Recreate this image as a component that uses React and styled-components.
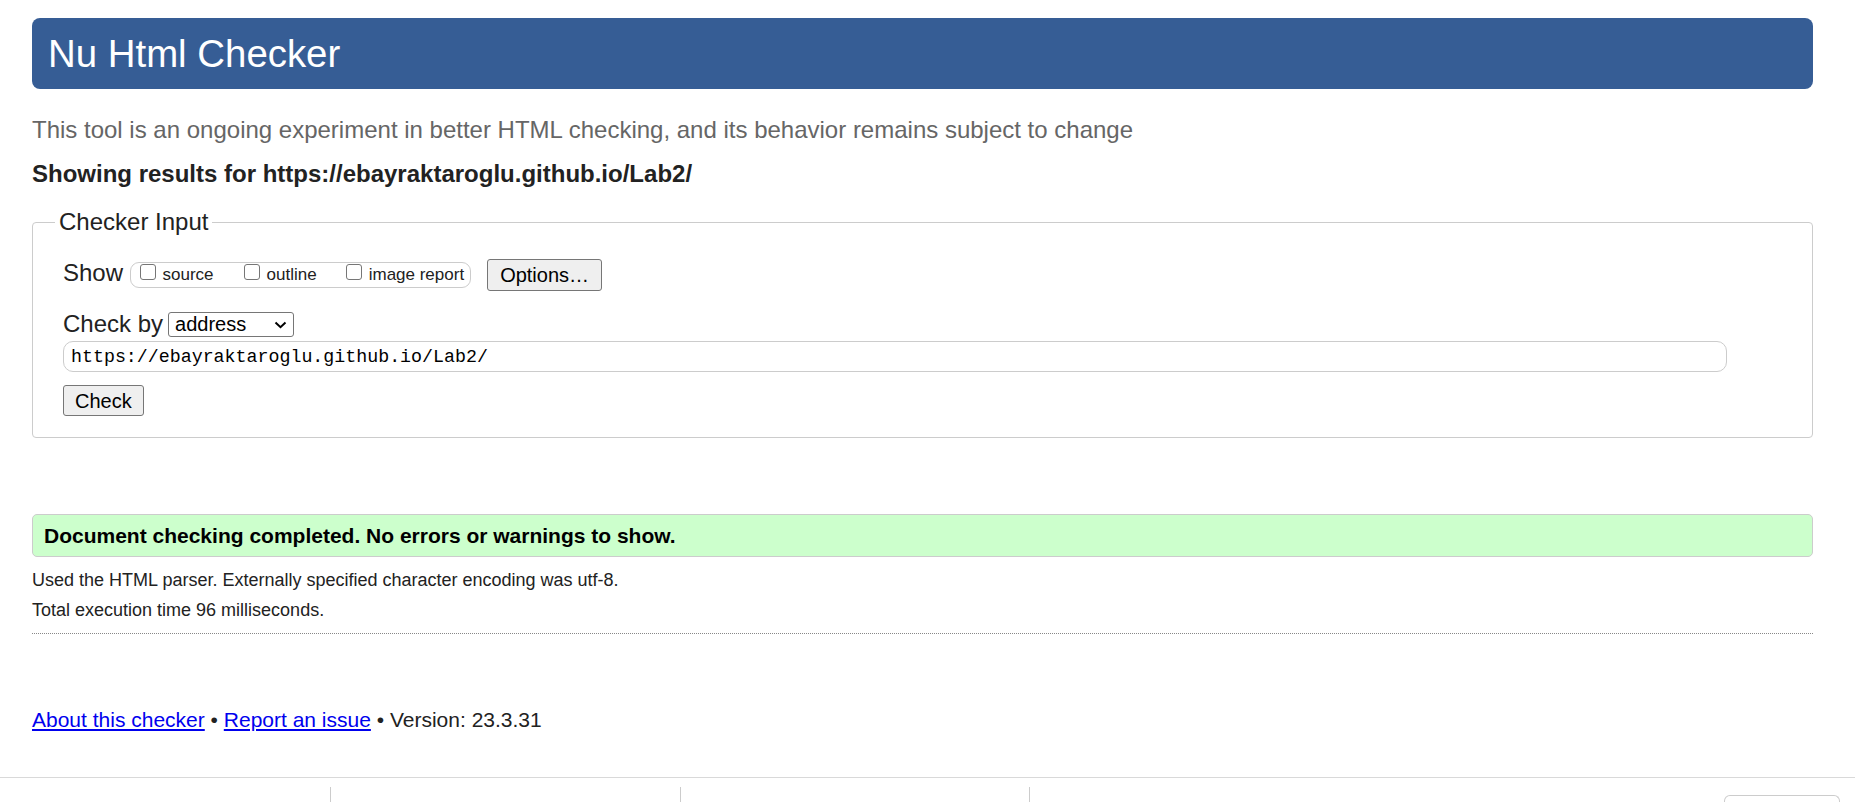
import React from "react";
import styled, { createGlobalStyle } from "styled-components";

const GlobalStyle = createGlobalStyle`
  html, body {
    margin: 0;
    padding: 0;
    background: #fff;
  }
  body {
    font-family: "Liberation Sans", Arial, sans-serif;
    color: #222;
  }
  * {
    box-sizing: border-box;
  }
`;

const Page = styled.div`
  padding: 18px 42px 0 32px;
`;

const Header = styled.h1`
  display: flex;
  align-items: center;
  height: 71px;
  margin: 0;
  padding: 2px 16px 0;
  border-radius: 8px;
  background: #365d95;
  color: #fff;
  font-size: 38.4px;
  font-weight: normal;
  line-height: 1.15;
`;

const Intro = styled.p`
  margin: 27px 0 0;
  font-size: 24px;
  line-height: 28px;
  color: #666;
`;

const ResultsFor = styled.p`
  margin: 16px 0 0;
  font-size: 24px;
  line-height: 28px;
  font-weight: bold;
  color: #222;
`;

const InputBox = styled.fieldset`
  margin: 20px 0 0;
  min-width: 0;
  padding: 23px 30px 21px;
  border: 1px solid #ccc;
  border-radius: 4px;

  legend {
    margin-left: -8px;
    padding: 0 4px;
    font-size: 24px;
    line-height: 28px;
    color: #222;
  }
`;

const Row = styled.div`
  display: flex;
  align-items: center;
  height: ${({ $height }) => $height}px;
  margin-top: ${({ $gap }) => $gap || 0}px;
`;

const RowLabel = styled.span`
  margin: 0 ${({ $space }) => $space}px ${({ $lift }) => $lift || 0}px 0;
  font-size: 24px;
  line-height: 28px;
  color: #222;
`;

const ShowGroup = styled.div`
  display: flex;
  align-items: center;
  height: 26px;
  padding: 0 6px 0 8.5px;
  border: 1px solid #ccc;
  border-radius: 9px;
`;

const CheckLabel = styled.label`
  display: flex;
  align-items: center;
  margin-right: ${({ $space }) => $space || 0}px;
  font-size: 17px;
  line-height: 20px;
  color: #222;
`;

const Checkbox = styled.input.attrs({ type: "checkbox" })`
  appearance: none;
  width: 16px;
  height: 16px;
  margin: 0 7px 7px 0;
  border: 1px solid #767676;
  border-radius: 3px;
  background: #fff;
`;

const Button = styled.button`
  height: ${({ $height }) => $height}px;
  margin-left: ${({ $offset }) => $offset || 0}px;
  padding: 0 ${({ $pad }) => $pad}px;
  border: 1px solid #767676;
  border-radius: 3px;
  background: #efefef;
  color: #000;
  font-family: "Liberation Sans", Arial, sans-serif;
  font-size: 20px;
  line-height: 1;
`;

const SelectWrap = styled.div`
  position: relative;
  width: 126px;
  height: 25px;

  svg {
    position: absolute;
    right: 7px;
    top: 9px;
    pointer-events: none;
  }
`;

const Select = styled.select`
  appearance: none;
  width: 100%;
  height: 100%;
  padding: 0 0 0 6px;
  border: 1px solid #767676;
  border-radius: 3px;
  background: #fff;
  color: #000;
  font-family: "Liberation Sans", Arial, sans-serif;
  font-size: 20px;
`;

const UrlInput = styled.input`
  display: block;
  width: calc(100% - 55px);
  height: 31px;
  margin-top: 3px;
  padding: 0 7px;
  border: 1px solid #ccc;
  border-radius: 10px;
  color: #000;
  font-family: "Liberation Mono", "DejaVu Sans Mono", monospace;
  font-size: 18.3px;
`;

const CheckRow = styled.div`
  margin-top: 13px;
`;

const Success = styled.div`
  display: flex;
  align-items: center;
  height: 43px;
  margin-top: 76px;
  padding: 0 11px;
  border: 1px solid #ccc;
  border-radius: 5px;
  background: #ccffcc;
  color: #000;
  font-size: 21px;
  line-height: 24px;
  font-weight: bold;
`;

const Detail = styled.p`
  margin: ${({ $gap }) => $gap}px 0 0;
  font-size: 18px;
  line-height: 22px;
  color: #222;
`;

const Rule = styled.hr`
  margin: 12px 0 0;
  border: 0;
  border-top: 1px dotted #888;
`;

const Footer = styled.p`
  margin: 74px 0 0;
  font-size: 21px;
  line-height: 24px;
  color: #222;

  a {
    color: #0000ee;
    text-decoration: underline;
  }
`;

const BottomBar = styled.div`
  display: flex;
  height: 25px;
  margin-top: 45px;
  overflow: hidden;
  border-top: 1px solid #d9d9d9;
`;

const Tab = styled.div`
  flex: none;
  width: ${({ $width }) => $width}px;
  height: 20px;
  margin-top: 9px;
  border-right: 1px solid #ccc;
`;

const Spacer = styled.div`
  flex: 1;
`;

const BarButton = styled.div`
  flex: none;
  width: 116px;
  height: 20px;
  margin: 17px 15px 0 0;
  border: 1px solid #ccc;
  border-bottom: 0;
  border-radius: 6px 6px 0 0;
`;

const Chevron = () => (
  <svg width="13" height="8" viewBox="0 0 13 8">
    <path d="M1.5 1.5 L6.5 6.2 L11.5 1.5" fill="none" stroke="#000" strokeWidth="2" />
  </svg>
);

const App = () => {
  const url = "https://ebayraktaroglu.github.io/Lab2/";
  return (
    <>
      <GlobalStyle />
      <Page>
        <Header>Nu Html Checker</Header>
        <Intro>
          This tool is an ongoing experiment in better HTML checking, and its
          behavior remains subject to change
        </Intro>
        <ResultsFor>Showing results for {url}</ResultsFor>

        <InputBox>
          <legend>Checker Input</legend>
          <Row $height={32}>
            <RowLabel $space={7} $lift={5}>
              Show
            </RowLabel>
            <ShowGroup>
              <CheckLabel $space={30}>
                <Checkbox />
                source
              </CheckLabel>
              <CheckLabel $space={29}>
                <Checkbox />
                outline
              </CheckLabel>
              <CheckLabel>
                <Checkbox />
                image report
              </CheckLabel>
            </ShowGroup>
            <Button $height={32} $pad={12} $offset={16}>
              Options…
            </Button>
          </Row>
          <Row $height={28} $gap={19}>
            <RowLabel $space={5}>Check by</RowLabel>
            <SelectWrap>
              <Select defaultValue="address">
                <option value="address">address</option>
                <option value="file">file upload</option>
                <option value="text">text input</option>
              </Select>
              <Chevron />
            </SelectWrap>
          </Row>
          <UrlInput type="url" defaultValue={url} />
          <CheckRow>
            <Button $height={31} $pad={11}>
              Check
            </Button>
          </CheckRow>
        </InputBox>

        <Success>Document checking completed. No errors or warnings to show.</Success>
        <Detail $gap={12}>
          Used the HTML parser. Externally specified character encoding was utf-8.
        </Detail>
        <Detail $gap={8}>Total execution time 96 milliseconds.</Detail>
        <Rule />

        <Footer>
          <a href="#about">About this checker</a> • <a href="#issue">Report an issue</a> •
          Version: 23.3.31
        </Footer>
      </Page>
      <BottomBar>
        <Tab $width={331} />
        <Tab $width={350} />
        <Tab $width={349} />
        <Spacer />
        <BarButton />
      </BottomBar>
    </>
  );
};

export default App;
